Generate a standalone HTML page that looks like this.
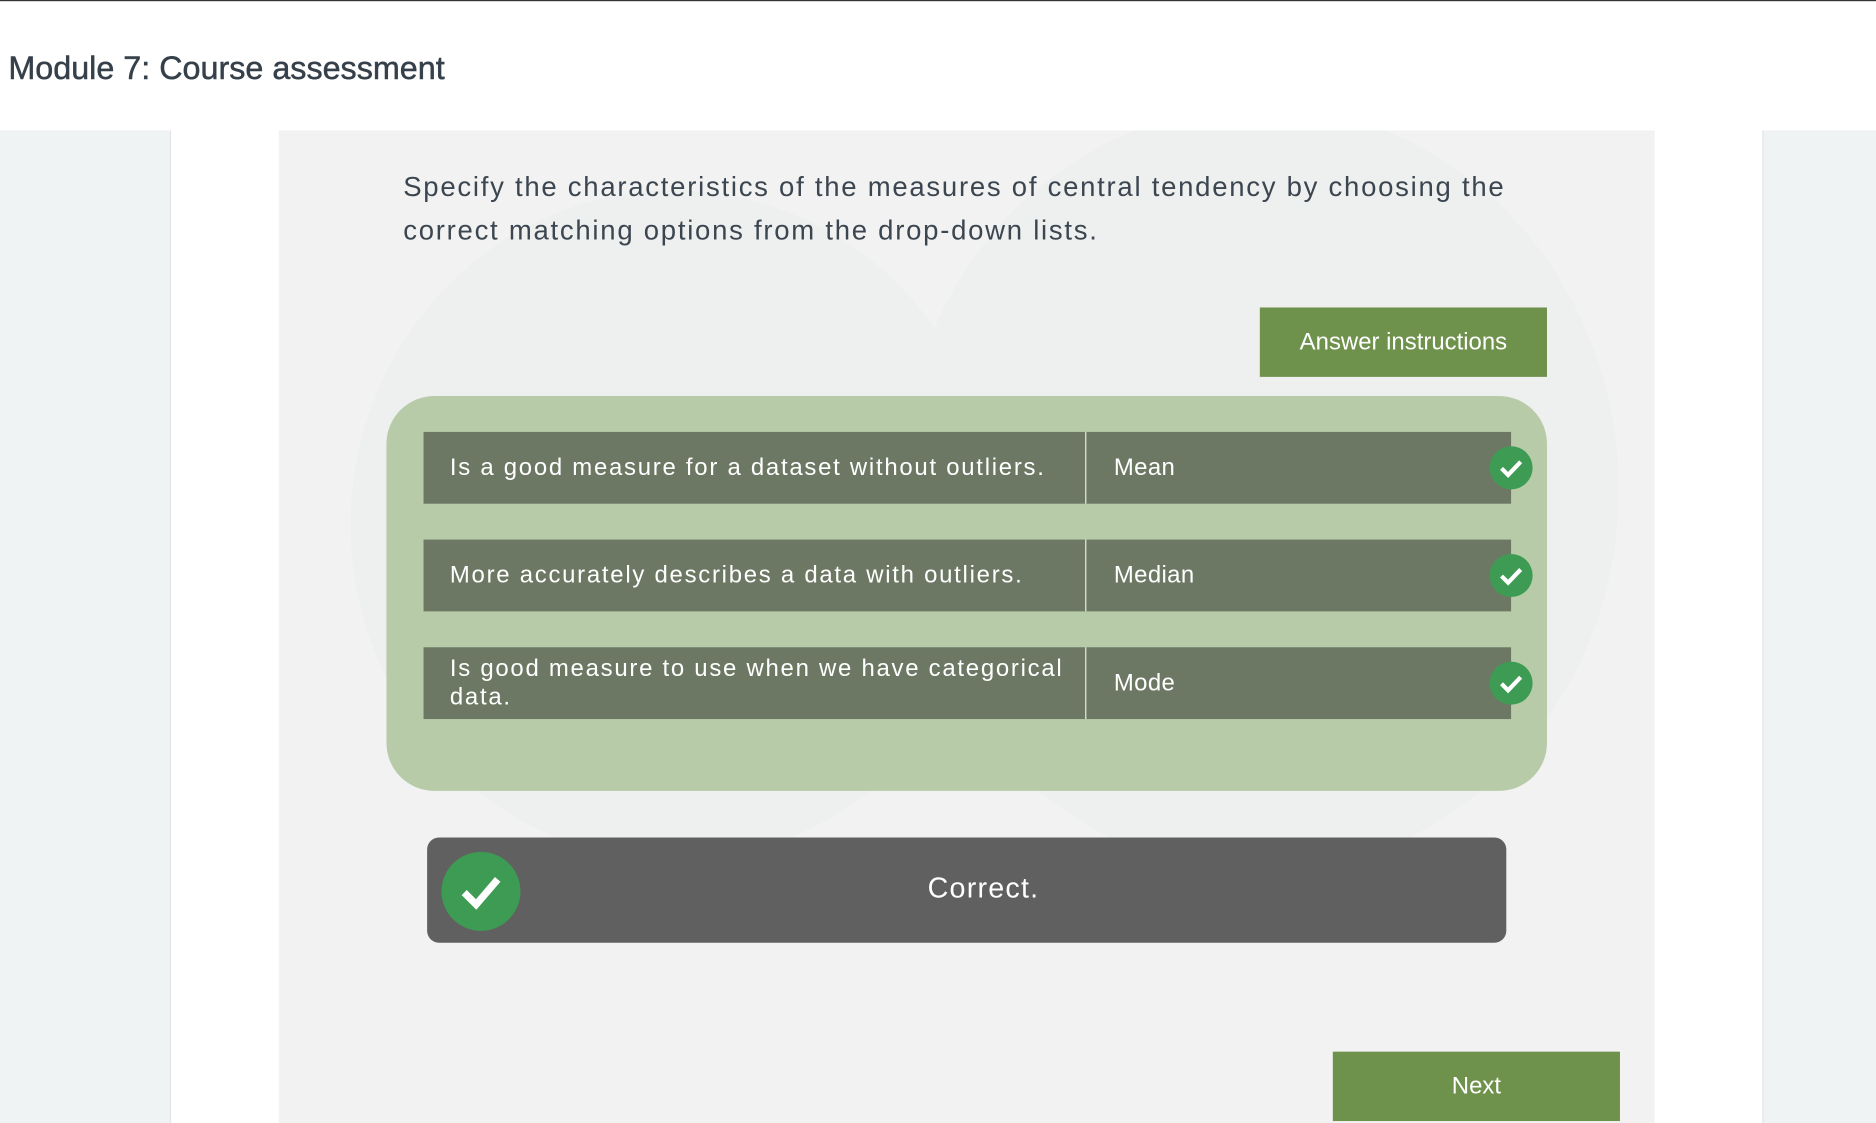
<!DOCTYPE html>
<html><head><meta charset="utf-8"><style>
html,body{margin:0;padding:0;width:1876px;height:1123px;overflow:hidden;background:#fff}
#w{position:absolute;left:0;top:0;width:1568px;height:939px;transform:scale(1.19643);transform-origin:0 0;font-family:"Liberation Sans",sans-serif}
.a{position:absolute}
.row{position:absolute;left:354px;width:909px;height:60px;background:#6d7864;color:#fff;font-size:20px;letter-spacing:1.45px}
.l{position:absolute;left:22px;top:0;width:530px;height:60px;display:flex;align-items:center;line-height:24px}
.d{position:absolute;left:553px;top:0;width:1px;height:60px;background:#e8ece4}
.r{position:absolute;left:577px;top:0;height:60px;display:flex;align-items:center;letter-spacing:0.3px}
.ck{position:absolute;left:891px;top:12px;width:36px;height:36px;border-radius:50%;background:#3e9b53}
.btn{position:absolute;background:#6e914b;color:#fff;font-size:20px;display:flex;align-items:center;justify-content:center}
</style></head><body><div id="w">
<div class="a" style="left:0;top:0;width:1568px;height:1px;background:#333"></div>
<div class="a" style="left:7px;top:42px;font-size:27px;color:#36404a;-webkit-text-stroke:0.4px #36404a">Module 7: Course assessment</div>
<div class="a" style="left:0;top:109px;width:142px;height:830px;background:#f0f3f4"></div>
<div class="a" style="left:142px;top:109px;width:1px;height:830px;background:#e2e5e6"></div>
<div class="a" style="left:233px;top:109px;width:1150px;height:830px;background:#f2f2f2;overflow:hidden">
 <div class="a" style="left:60px;top:50px;width:540px;height:560px;border-radius:50%;background:#eeefef"></div>
 <div class="a" style="left:520px;top:-20px;width:600px;height:640px;border-radius:50%;background:#eeefef"></div>
</div>
<div class="a" style="left:1473px;top:109px;width:95px;height:830px;background:#f0f3f4"></div>
<div class="a" style="left:1473px;top:109px;width:1px;height:830px;background:#e2e5e6"></div>
<div class="a" style="left:337px;top:138px;font-size:23px;line-height:36px;letter-spacing:1.45px;color:#3c4650;width:980px">Specify the characteristics of the measures of central tendency by choosing the correct matching options from the drop-down lists.</div>
<div class="btn" style="left:1053px;top:257px;width:240px;height:58px">Answer instructions</div>
<div class="a" style="left:323px;top:331px;width:970px;height:330px;border-radius:40px;background:#b7cba9"></div>
<div class="row" style="top:361px"><div class="l">Is a good measure for a dataset without outliers.</div><div class="d"></div><div class="r">Mean</div><div class="ck"><svg width="36" height="36"><path d="M10 18.5l5.5 5.5L26 13" stroke="#fff" stroke-width="3.5" fill="none"/></svg></div></div>
<div class="row" style="top:451px"><div class="l">More accurately describes a data with outliers.</div><div class="d"></div><div class="r">Median</div><div class="ck"><svg width="36" height="36"><path d="M10 18.5l5.5 5.5L26 13" stroke="#fff" stroke-width="3.5" fill="none"/></svg></div></div>
<div class="row" style="top:541px"><div class="l">Is good measure to use when we have categorical data.</div><div class="d"></div><div class="r">Mode</div><div class="ck"><svg width="36" height="36"><path d="M10 18.5l5.5 5.5L26 13" stroke="#fff" stroke-width="3.5" fill="none"/></svg></div></div>
<div class="a" style="left:357px;top:700px;width:902px;height:88px;border-radius:10px;background:#606060"></div>
<div class="a" style="left:369px;top:712px;width:66px;height:66px;border-radius:50%;background:#3e9b53"><svg width="66" height="66"><path d="M19 34l10 10L47 23" stroke="#fff" stroke-width="6" fill="none"/></svg></div>
<div class="a" style="left:357px;top:729px;width:930px;text-align:center;font-size:24px;color:#fff;letter-spacing:1px">Correct.</div>
<div class="btn" style="left:1114px;top:879px;width:240px;height:58px">Next</div>
</div></body></html>
